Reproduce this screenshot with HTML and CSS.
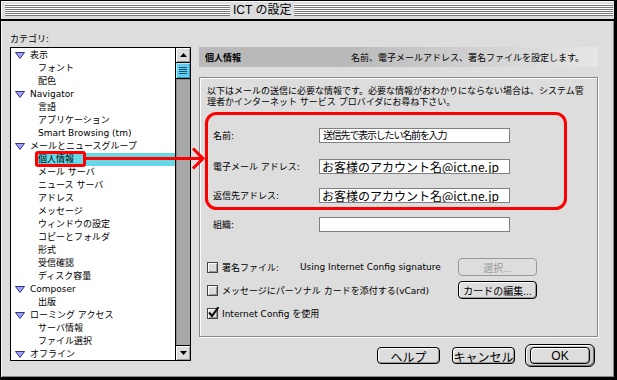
FILE: index.html
```html
<!DOCTYPE html>
<html lang="ja">
<head>
    <meta charset="UTF-8">
    <title>ICT の設定</title>
    <link rel="stylesheet" href="styles.css">
</head>
<body>
<div class="window">
    <div class="titlebar">
        <div class="stripes left"></div>
        <div class="title">ICT の設定</div>
        <div class="stripes right"></div>
    </div>

    <div class="main">
        <div class="category">
            <div class="cat-label">カテゴリ:</div>
            <div class="list">
                <div class="items">
                    <div class="row top"><svg class="tri" viewBox="0 0 10 7"><polygon points="0.5,0.5 9.5,0.5 5,6.5"/></svg>表示</div>
                    <div class="row child"><span class="txt">フォント</span></div>
                    <div class="row child"><span class="txt">配色</span></div>
                    <div class="row top"><svg class="tri" viewBox="0 0 10 7"><polygon points="0.5,0.5 9.5,0.5 5,6.5"/></svg>Navigator</div>
                    <div class="row child"><span class="txt">言語</span></div>
                    <div class="row child"><span class="txt">アプリケーション</span></div>
                    <div class="row child"><span class="txt">Smart Browsing (tm)</span></div>
                    <div class="row top"><svg class="tri" viewBox="0 0 10 7"><polygon points="0.5,0.5 9.5,0.5 5,6.5"/></svg>メールとニュースグループ</div>
                    <div class="row child sel"><span class="txt">個人情報</span></div>
                    <div class="row child"><span class="txt">メール サーバ</span></div>
                    <div class="row child"><span class="txt">ニュース サーバ</span></div>
                    <div class="row child"><span class="txt">アドレス</span></div>
                    <div class="row child"><span class="txt">メッセージ</span></div>
                    <div class="row child"><span class="txt">ウィンドウの設定</span></div>
                    <div class="row child"><span class="txt">コピーとフォルダ</span></div>
                    <div class="row child"><span class="txt">形式</span></div>
                    <div class="row child"><span class="txt">受信確認</span></div>
                    <div class="row child"><span class="txt">ディスク容量</span></div>
                    <div class="row top"><svg class="tri" viewBox="0 0 10 7"><polygon points="0.5,0.5 9.5,0.5 5,6.5"/></svg>Composer</div>
                    <div class="row child"><span class="txt">出版</span></div>
                    <div class="row top"><svg class="tri" viewBox="0 0 10 7"><polygon points="0.5,0.5 9.5,0.5 5,6.5"/></svg>ローミング アクセス</div>
                    <div class="row child"><span class="txt">サーバ情報</span></div>
                    <div class="row child"><span class="txt">ファイル選択</span></div>
                    <div class="row top"><svg class="tri" viewBox="0 0 10 7"><polygon points="0.5,0.5 9.5,0.5 5,6.5"/></svg>オフライン</div>
                </div>
                <div class="scrollbar">
                    <div class="sb-btn up"><svg viewBox="0 0 7 4"><polygon points="3.5,0 7,4 0,4"/></svg></div>
                    <div class="sb-thumb"><div class="grip"></div></div>
                    <div class="sb-track"></div>
                    <div class="sb-btn down"><svg viewBox="0 0 7 4"><polygon points="0,0 7,0 3.5,4"/></svg></div>
                </div>
            </div>
        </div>

        <div class="panel">
            <div class="panel-head">
                <b>個人情報</b>
                <span>名前、電子メールアドレス、署名ファイルを設定します。</span>
            </div>

            <div class="group">
                <p class="desc">以下はメールの送信に必要な情報です。必要な情報がおわかりにならない場合は、システム管<br>理者かインターネット サービス プロバイダにお尋ね下さい。</p>

                <div class="frow first">
                    <label>名前:</label>
                    <div class="field hint">送信先で表示したい名前を入力</div>
                </div>
                <div class="frow mail">
                    <label>電子メール アドレス:</label>
                    <div class="field big">お客様のアカウント名@ict.ne.jp</div>
                </div>
                <div class="frow">
                    <label>返信先アドレス:</label>
                    <div class="field big">お客様のアカウント名@ict.ne.jp</div>
                </div>
                <div class="frow">
                    <label>組織:</label>
                    <div class="field"></div>
                </div>

                <div class="checks">
                    <div class="crow">
                        <span class="cbox"></span>
                        <span class="sig-label">署名ファイル:</span>
                        <span class="sig-value">Using Internet Config signature</span>
                        <button class="btn small disabled">選択...</button>
                    </div>
                    <div class="crow">
                        <span class="cbox"></span>
                        <span>メッセージにパーソナル カードを添付する(vCard)</span>
                        <button class="btn small">カードの編集...</button>
                    </div>
                    <div class="crow">
                        <span class="cbox checked"><svg viewBox="0 0 12 12"><path d="M2 5.5 L5 9 L11.5 0"/></svg></span>
                        <span>Internet Config を使用</span>
                    </div>
                </div>
            </div>

            <div class="buttons">
                <button class="btn wide">ヘルプ</button>
                <button class="btn wide">キャンセル</button>
                <div class="ok-ring"><button class="btn ok">OK</button></div>
            </div>
        </div>
    </div>

    <svg class="annot" width="617" height="380" viewBox="0 0 617 380">
        <rect x="36.5" y="152.5" width="48" height="13" rx="1.5"/>
        <line x1="86" y1="158.5" x2="202" y2="158.5"/>
        <polyline points="193,148.5 203,158.5 193,168.5"/>
        <rect x="206.5" y="113.5" width="359" height="95" rx="10"/>
    </svg>
</div>
</body>
</html>
```

FILE: styles.css
```css
* {
    margin: 0;
    padding: 0;
    box-sizing: border-box;
}

body {
    background-color: #000;
    font-family: "DejaVu Sans", "Noto Sans CJK JP", sans-serif;
    font-size: 9px;
    color: #000;
}

.window {
    position: relative;
    width: 617px;
    height: 380px;
    background-color: #ddd;
    border: 1px solid #000;
    border-right-width: 3px;
    border-bottom-width: 3px;
    box-shadow: inset 1px 1px #f4f4f4, inset -1px -1px #888;
}

/* title bar */
.titlebar {
    display: flex;
    height: 20px;
    padding: 3px 1px 0 4px;
    border-bottom: 2px solid #000;
    background-color: #ddd;
    box-shadow: inset 1px 1px #fff;
}

.stripes {
    height: 12px;
    background: repeating-linear-gradient(to bottom, #fff 0, #fff 1px, #777 1px, #777 2px);
}

.stripes.left {
    width: 225px;
}

.stripes.right {
    flex: 1;
}

.title {
    padding: 0 3px;
    font-family: "Liberation Sans", "Noto Sans CJK JP", sans-serif;
    font-size: 12px;
    line-height: 12px;
    white-space: nowrap;
}

/* layout */
.main {
    display: flex;
    padding-left: 9px;
}

.category {
    width: 181px;
}

.cat-label {
    height: 26px;
    padding-top: 12px;
    line-height: 12px;
}

.list {
    display: flex;
    height: 314px;
    border: 1px solid #000;
    background-color: #fff;
}

.items {
    flex: 1;
    padding-top: 1px;
    overflow: hidden;
}

.row {
    display: flex;
    align-items: center;
    height: 13px;
    line-height: 13px;
    white-space: nowrap;
}

.row.top {
    padding-left: 4px;
}

.row.child {
    padding-left: 24px;
}

.row .txt {
    flex: 1;
    padding-left: 3px;
}

.row.sel .txt {
    background-color: #66d8e6;
}

.tri {
    width: 10px;
    height: 7px;
    margin-right: 5px;
    fill: #a0a0ff;
    stroke: #333380;
    stroke-width: 1;
}

/* scrollbar */
.scrollbar {
    display: flex;
    flex-direction: column;
    width: 15px;
    border-left: 1px solid #000;
}

.sb-btn {
    display: flex;
    align-items: center;
    justify-content: center;
    height: 15px;
    background-color: #ddd;
    box-shadow: inset 1px 1px #fff, inset -1px -1px #999;
}

.sb-btn svg {
    width: 7px;
    height: 4px;
    fill: #000;
}

.sb-btn.up {
    border-bottom: 1px solid #000;
}

.sb-btn.down {
    border-top: 1px solid #000;
}

.sb-thumb {
    display: flex;
    align-items: center;
    justify-content: center;
    height: 16px;
    border-bottom: 1px solid #000;
    background-color: #66ccee;
    box-shadow: inset 1px 1px #aaeeff, inset -1px -1px #3399bb;
}

.grip {
    width: 8px;
    height: 7px;
    background: repeating-linear-gradient(to bottom, #115577 0, #115577 1px, transparent 1px, transparent 2px);
}

.sb-track {
    flex: 1;
    background-color: #a8a8a8;
    box-shadow: inset 1px 1px #888;
}

/* right panel */
.panel {
    width: 399px;
    margin-left: 8px;
    padding-top: 26px;
}

.panel-head {
    display: flex;
    align-items: center;
    justify-content: space-between;
    height: 20px;
    padding: 0 14px 0 6px;
    background: linear-gradient(to right, #b9b9b9 0%, #b9b9b9 36%, #e6e6e6 100%);
    white-space: nowrap;
}

.group {
    height: 260px;
    margin-top: 10px;
    padding: 8px 0 0 7px;
    border: 1px solid #888;
    box-shadow: inset 1px 1px #fff, 1px 1px #fff;
}

.desc {
    line-height: 11px;
    white-space: nowrap;
}

.frow {
    display: flex;
    align-items: center;
    height: 15px;
    margin-top: 14px;
    padding-left: 6px;
}

.frow.first {
    margin-top: 20px;
}

.frow.mail {
    margin-top: 16px;
}

.frow label {
    width: 106px;
    white-space: nowrap;
}

.field {
    width: 191px;
    height: 15px;
    padding-left: 3px;
    border: 1px solid #808080;
    background-color: #fff;
    white-space: nowrap;
    overflow: hidden;
}

.field.hint {
    font-size: 10px;
    line-height: 13px;
    letter-spacing: -1.2px;
}

.field.big {
    padding-left: 2px;
    font-family: "Noto Sans CJK JP", sans-serif;
    font-size: 12px;
    line-height: 13px;
}

/* checkboxes */
.checks {
    display: flex;
    flex-direction: column;
    gap: 5px;
    margin-top: 26px;
}

.crow {
    display: flex;
    align-items: center;
    width: 330px;
    height: 18px;
    white-space: nowrap;
}

.cbox {
    position: relative;
    width: 11px;
    height: 11px;
    margin-right: 4px;
    border: 1px solid #444;
    background-color: #ddd;
    box-shadow: inset 1px 1px #fff, inset -1px -1px #999;
}

.cbox svg {
    position: absolute;
    left: -1px;
    top: -2px;
    width: 12px;
    height: 12px;
    fill: none;
    stroke: #000;
    stroke-width: 2;
}

.sig-label {
    width: 78px;
}

.sig-value {
    width: 158px;
}

/* buttons */
.btn {
    height: 18px;
    border: 1px solid #000;
    border-radius: 4px;
    background-color: #ddd;
    box-shadow: inset 1px 1px #fff, inset -1px -1px #999;
    font-family: "Liberation Sans", "Noto Sans CJK JP", sans-serif;
    color: #000;
    white-space: nowrap;
}

.btn.small {
    width: 79px;
    margin-left: auto;
    font-size: 10px;
}

.btn.disabled {
    border-color: #999;
    color: #999;
    box-shadow: none;
}

.buttons {
    display: flex;
    align-items: center;
    justify-content: flex-end;
    gap: 12px;
    height: 23px;
    margin-top: 7px;
    padding-right: 3px;
}

.btn.wide {
    width: 63px;
    height: 17px;
    font-size: 12px;
}

.ok-ring {
    margin-left: -2px;
    padding: 2px 4px;
    border: 1px solid #000;
    border-radius: 6px;
    background-color: #ccc;
    box-shadow: inset 1px 1px #fff, inset -1px -1px #777;
}

.btn.ok {
    display: block;
    width: 60px;
    height: 17px;
    font-size: 12px;
}

/* red annotation marks */
.annot {
    position: absolute;
    left: -1px;
    top: -1px;
    pointer-events: none;
    fill: none;
    stroke: #ff0000;
    stroke-width: 3;
}
```
